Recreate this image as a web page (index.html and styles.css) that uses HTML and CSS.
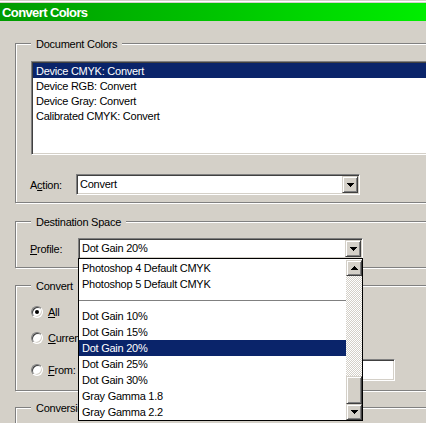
FILE: index.html
```html
<!DOCTYPE html>
<html>
<head>
<meta charset="utf-8">
<title>Convert Colors</title>
<link rel="stylesheet" href="styles.css">
</head>
<body>
<div class="window">
  <div class="frame">
    <div class="titlebar">Convert Colors</div>
    <div class="content">
      <div class="group g-doc">
        <span class="legend">Document Colors</span>
        <div class="listbox">
          <div class="li sel">Device CMYK: Convert</div>
          <div class="li">Device RGB: Convert</div>
          <div class="li">Device Gray: Convert</div>
          <div class="li">Calibrated CMYK: Convert</div>
        </div>
        <div class="row action-row">
          <span class="lbl lbl-action">A<u>c</u>tion:</span>
          <div class="combo combo-action">
            <span class="combo-text">Convert</span>
            <span class="btn"><svg class="arrow" width="7" height="4" viewBox="0 0 7 4"><path d="M0 0h7v1h-1v1h-1v1h-1v1h-1v-1h-1v-1h-1v-1h-1z"/></svg></span>
          </div>
        </div>
      </div>

      <div class="group g-dest">
        <span class="legend">Destination Space</span>
        <div class="row">
          <span class="lbl lbl-profile"><u>P</u>rofile:</span>
          <div class="combo-wrap">
            <div class="combo combo-profile">
              <span class="combo-text">Dot Gain 20%</span>
              <span class="btn"><svg class="arrow" width="7" height="4" viewBox="0 0 7 4"><path d="M0 0h7v1h-1v1h-1v1h-1v1h-1v-1h-1v-1h-1v-1h-1z"/></svg></span>
            </div>
            <div class="dropdown">
              <div class="dd-list">
                <div class="di">Photoshop 4 Default CMYK</div>
                <div class="di">Photoshop 5 Default CMYK</div>
                <div class="di sep"></div>
                <div class="di">Dot Gain 10%</div>
                <div class="di">Dot Gain 15%</div>
                <div class="di sel">Dot Gain 20%</div>
                <div class="di">Dot Gain 25%</div>
                <div class="di">Dot Gain 30%</div>
                <div class="di">Gray Gamma 1.8</div>
                <div class="di">Gray Gamma 2.2</div>
              </div>
              <div class="scrollbar">
                <div class="sb-btn"><svg class="arrow" width="7" height="4" viewBox="0 0 7 4"><path d="M3 0h1v1h1v1h1v1h1v1h-7v-1h1v-1h1v-1h1z"/></svg></div>
                <div class="sb-track"></div>
                <div class="sb-thumb"></div>
                <div class="sb-btn"><svg class="arrow" width="7" height="4" viewBox="0 0 7 4"><path d="M0 0h7v1h-1v1h-1v1h-1v1h-1v-1h-1v-1h-1v-1h-1z"/></svg></div>
              </div>
            </div>
          </div>
        </div>
      </div>

      <div class="group g-conv">
        <span class="legend">Convert</span>
        <div class="radio-row r1">
          <span class="radio on"></span>
          <span class="rlabel"><u>A</u>ll</span>
        </div>
        <div class="radio-row r2">
          <span class="radio"></span>
          <span class="rlabel"><u>C</u>urrent Page</span>
        </div>
        <div class="radio-row r3">
          <span class="radio"></span>
          <span class="rlabel rlabel-from"><u>F</u>rom:</span>
          <span class="field"></span>
        </div>
      </div>

      <div class="group g-attr">
        <span class="legend">Conversion Attributes</span>
      </div>
    </div>
  </div>
</div>
</body>
</html>
```
FILE: styles.css
```css
* { box-sizing: border-box; }
html, body { margin: 0; padding: 0; }
body {
  width: 426px;
  height: 423px;
  overflow: hidden;
  background: #d4d0c8;
  font-family: "Liberation Sans", Arial, sans-serif;
  font-size: 11px;
  letter-spacing: -0.25px;
  color: #000;
}
.window {
  width: 640px;
  border-top: 1px solid #d4d0c8;
}
.frame {
  border-top: 1px solid #ffffff;
  padding-top: 1px;
}
.titlebar {
  height: 18px;
  line-height: 19px;
  background: linear-gradient(90deg, #009a00 0, #00ee00 426px);
  color: #fff;
  font-weight: bold;
  font-size: 13px;
  letter-spacing: -0.6px;
  padding-left: 2px;
}
.content {
  padding: 22px 0 0 15px;
}
.group {
  position: relative;
  width: 600px;
  border: 1px solid #808080;
  box-shadow: inset 1px 1px 0 #ffffff, 1px 1px 0 #ffffff;
}
.legend {
  position: absolute;
  top: -6px;
  left: 15px;
  padding: 0 5px;
  background: #d4d0c8;
  line-height: 13px;
  white-space: nowrap;
}
.g-doc { padding: 17px 0 7px 15px; }
.g-dest { margin-top: 18px; padding: 16px 0 8px 15px; }
.g-conv { margin-top: 17px; padding: 18px 0 9px 15px; }
.g-attr { margin-top: 16px; height: 60px; }

.listbox, .combo, .field {
  background: #fff;
  border: 1px solid;
  border-color: #808080 #ffffff #ffffff #808080;
  box-shadow: inset 1px 1px 0 #404040, inset -1px -1px 0 #d4d0c8;
}
.listbox {
  width: 560px;
  height: 94px;
  padding: 1px;
}
.li {
  height: 15px;
  line-height: 16px;
  padding-left: 3px;
  white-space: nowrap;
}
.li.sel, .di.sel {
  background: #0a246a;
  color: #fff;
}

.row {
  display: flex;
  align-items: center;
  height: 21px;
}
.action-row { margin-top: 19px; }
.lbl {
  margin-left: -1px;
  white-space: nowrap;
}
.lbl-action { width: 46px; }
.lbl-profile { width: 48px; }

.combo {
  display: flex;
  height: 21px;
  padding: 1px;
}
.combo-action { width: 284px; }
.combo-profile { width: 285px; }
.combo-text {
  flex: 1;
  padding-left: 2px;
  line-height: 17px;
  white-space: nowrap;
}
.btn, .sb-btn, .sb-thumb {
  background: #d4d0c8;
  border: 1px solid;
  border-color: #d4d0c8 #404040 #404040 #d4d0c8;
  box-shadow: inset 1px 1px 0 #ffffff, inset -1px -1px 0 #808080;
}
.btn {
  width: 16px;
  height: 17px;
  display: flex;
  align-items: center;
  justify-content: center;
}
.arrow {
  display: block;
  shape-rendering: crispEdges;
  fill: #000;
}

.combo-wrap {
  position: relative;
}
.dropdown {
  position: absolute;
  top: 20px;
  left: 0;
  width: 285px;
  height: 163px;
  border: 1px solid #000;
  background: #fff;
  display: flex;
  z-index: 10;
}
.dd-list {
  flex: 1;
  padding-top: 1px;
  overflow: hidden;
}
.di {
  height: 16px;
  line-height: 16px;
  padding-left: 3px;
  white-space: nowrap;
}
.di.sep {
  background: linear-gradient(#808080, #808080) 0 8px / 100% 1px no-repeat;
}
.scrollbar {
  width: 16px;
  display: flex;
  flex-direction: column;
  padding-top: 1px;
}
.sb-btn {
  height: 16px;
  display: flex;
  align-items: center;
  justify-content: center;
}
.sb-track {
  flex: 1;
  background: repeating-conic-gradient(#d4d0c8 0 25%, #ffffff 0 50%) 0 0 / 2px 2px;
}
.sb-thumb {
  height: 28px;
}

.radio-row {
  display: flex;
  align-items: center;
  height: 16px;
}
.r2 { margin-top: 10px; }
.r3 { margin-top: 13px; height: 22px; }
.radio {
  width: 12px;
  height: 12px;
  border-radius: 50%;
  background: #fff;
  border: 1px solid;
  border-color: #808080 #ffffff #ffffff #808080;
  box-shadow: inset 1px 1px 0 #404040, inset -1px -1px 0 #d4d0c8;
  display: flex;
  align-items: center;
  justify-content: center;
  margin-right: 5px;
  flex: none;
}
.radio.on::after {
  content: "";
  width: 4px;
  height: 4px;
  border-radius: 50%;
  background: #000;
}
.rlabel { white-space: nowrap; }
.rlabel-from { width: 52px; }
.field {
  width: 295px;
  height: 22px;
}
```
